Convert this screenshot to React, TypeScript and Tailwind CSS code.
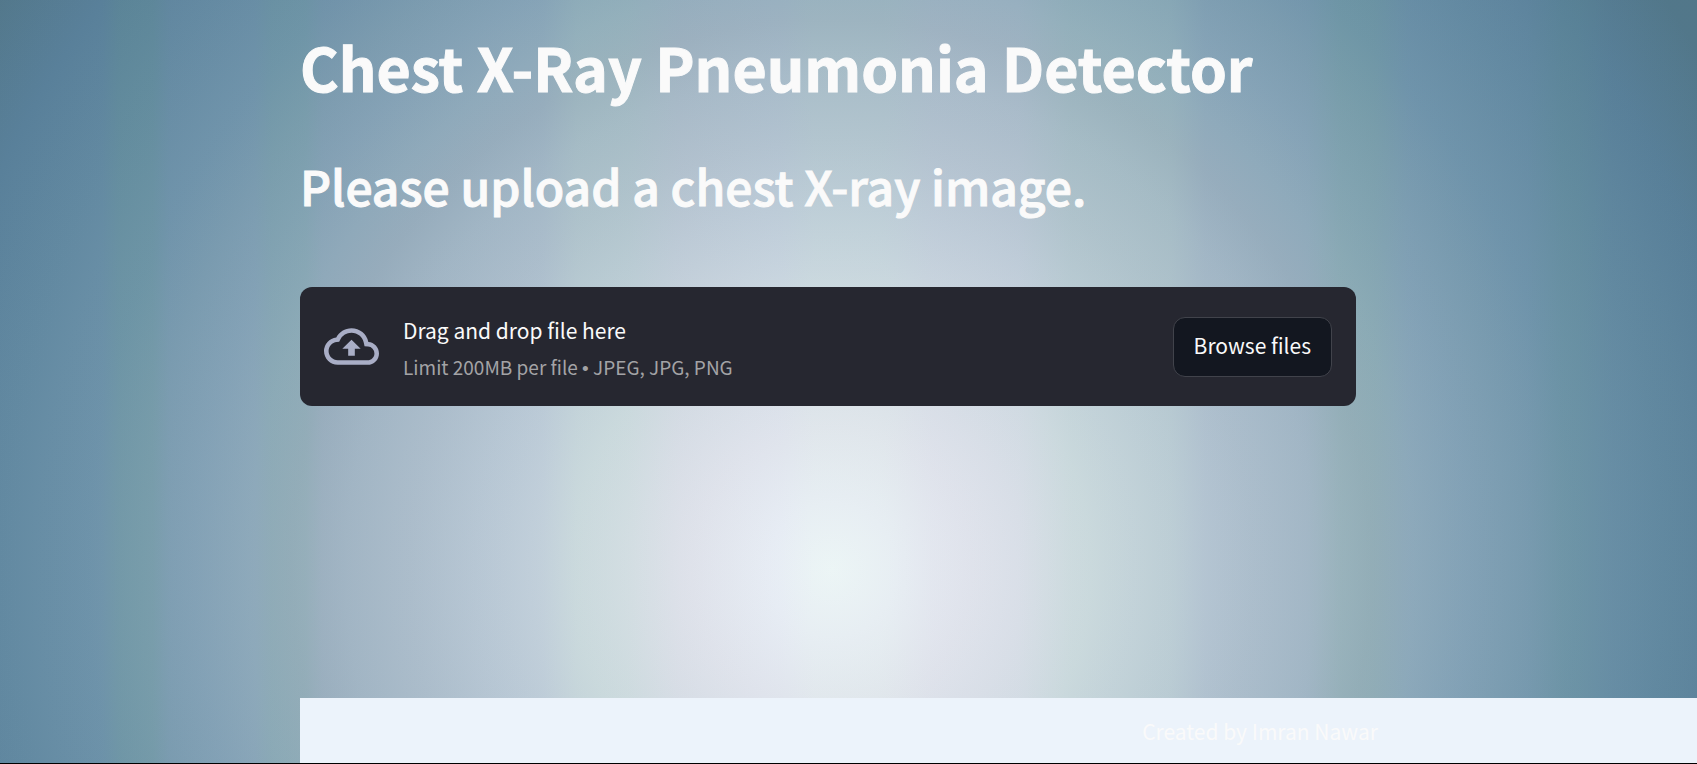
import { useRef } from "react";

function CloudUploadIcon() {
  return (
    <svg viewBox="0 0 24 24" className="size-[55px] shrink-0 text-[#a9aec6]" fill="currentColor" aria-hidden="true">
      <path d="M19.35 10.04A7.49 7.49 0 0 0 12 4C9.11 4 6.6 5.64 5.35 8.04A5.994 5.994 0 0 0 0 14c0 3.31 2.69 6 6 6h13c2.76 0 5-2.24 5-5 0-2.64-2.05-4.78-4.65-4.96zM19 18H6c-2.21 0-4-1.79-4-4 0-2.05 1.53-3.76 3.56-3.97l1.07-.11.5-.95A5.469 5.469 0 0 1 12 6c2.62 0 4.88 1.86 5.39 4.43l.3 1.5 1.53.11A2.98 2.98 0 0 1 22 15c0 1.65-1.35 3-3 3zM8 13h2.55v3h2.9v-3H16l-4-4z" />
    </svg>
  );
}

export default function App() {
  const fileInput = useRef<HTMLInputElement>(null);

  return (
    <div className="flex min-h-screen flex-col justify-between border-b border-black bg-[linear-gradient(90deg,#5a80b014_0%,#5a80b014_6%,#609a8a1c_7%,#609a8a1c_9%,#7a90c014_10%,#7a90c014_15%,#70a09a1c_16%,#70a09a1c_18%,#9090b814_19%,#8fa0c814_32%,#b8d8c81c_34%,#b8d8c81c_37%,#d8c8e014_40%,#e0e0ff14_46%,#e8fff014_48%,#e8fff014_52%,#e0d8f01c_55%,#e0d8f01c_60%,#b8d8c81c_63%,#b8d8c81c_69%,#90a0c814_71%,#90a0c814_77%,#70a8901c_79%,#70a8901c_81%,#7090c014_83%,#7090c014_90%,#5a90901c_92%,#5a90901c_93%,#5078a014_95%,#5078a014_100%),radial-gradient(ellipse_1080px_1100px_at_49%_570px,#ecf4f6_0%,#e7edf3_6%,#dfe4eb_13%,#d7dfe6_18%,#ccd9df_24%,#c4d2db_28%,#bacad5_33%,#aec0cc_39%,#a3b8c5_45%,#97aebc_50%,#8fabba_54%,#84a3b5_59%,#7a9cae_64%,#6f94a9_69%,#638aa0_77%,#598098_85%,#527788_93%)] font-['Noto_Sans_CJK_SC',sans-serif] text-[#fafafa]">
      <main className="ml-[300px] max-w-[1056px] pt-8">
        <h1 className="text-[59px]/[70px] font-bold [-webkit-text-stroke:1px_#fafafa]">Chest X-Ray Pneumonia Detector</h1>
        <h2 className="mt-12 text-[48px]/[70px] font-medium [-webkit-text-stroke:1px_#fafafa]">Please upload a chest X-ray image.</h2>
        <section className="mt-[67px] flex items-center gap-6 rounded-xl bg-[#262730] px-6 py-[23px]">
          <CloudUploadIcon />
          <div className="flex flex-1 flex-col">
            <label htmlFor="xray" className="text-[21px]/[40px]">Drag and drop file here</label>
            <small className="text-[19px]/[33px] text-[#a3a3a6]">
              Limit 200MB per file <span className="font-['Liberation_Sans',sans-serif] leading-none">•</span> JPEG, JPG, PNG
            </small>
          </div>
          <input ref={fileInput} id="xray" type="file" accept=".jpeg,.jpg,.png" className="hidden" />
          <button type="button" onClick={() => fileInput.current?.click()} className="h-15 rounded-xl border border-[#41434b] bg-[#131720] px-5 pb-1 text-[21px]/[36px]">
            Browse files
          </button>
        </section>
      </main>
      <footer className="ml-[300px] bg-[#ecf3fb] pt-[17px] pb-[15px] pl-[523px] text-center text-[21px]/[33px]">
        Created by Imran Nawar
      </footer>
    </div>
  );
}
